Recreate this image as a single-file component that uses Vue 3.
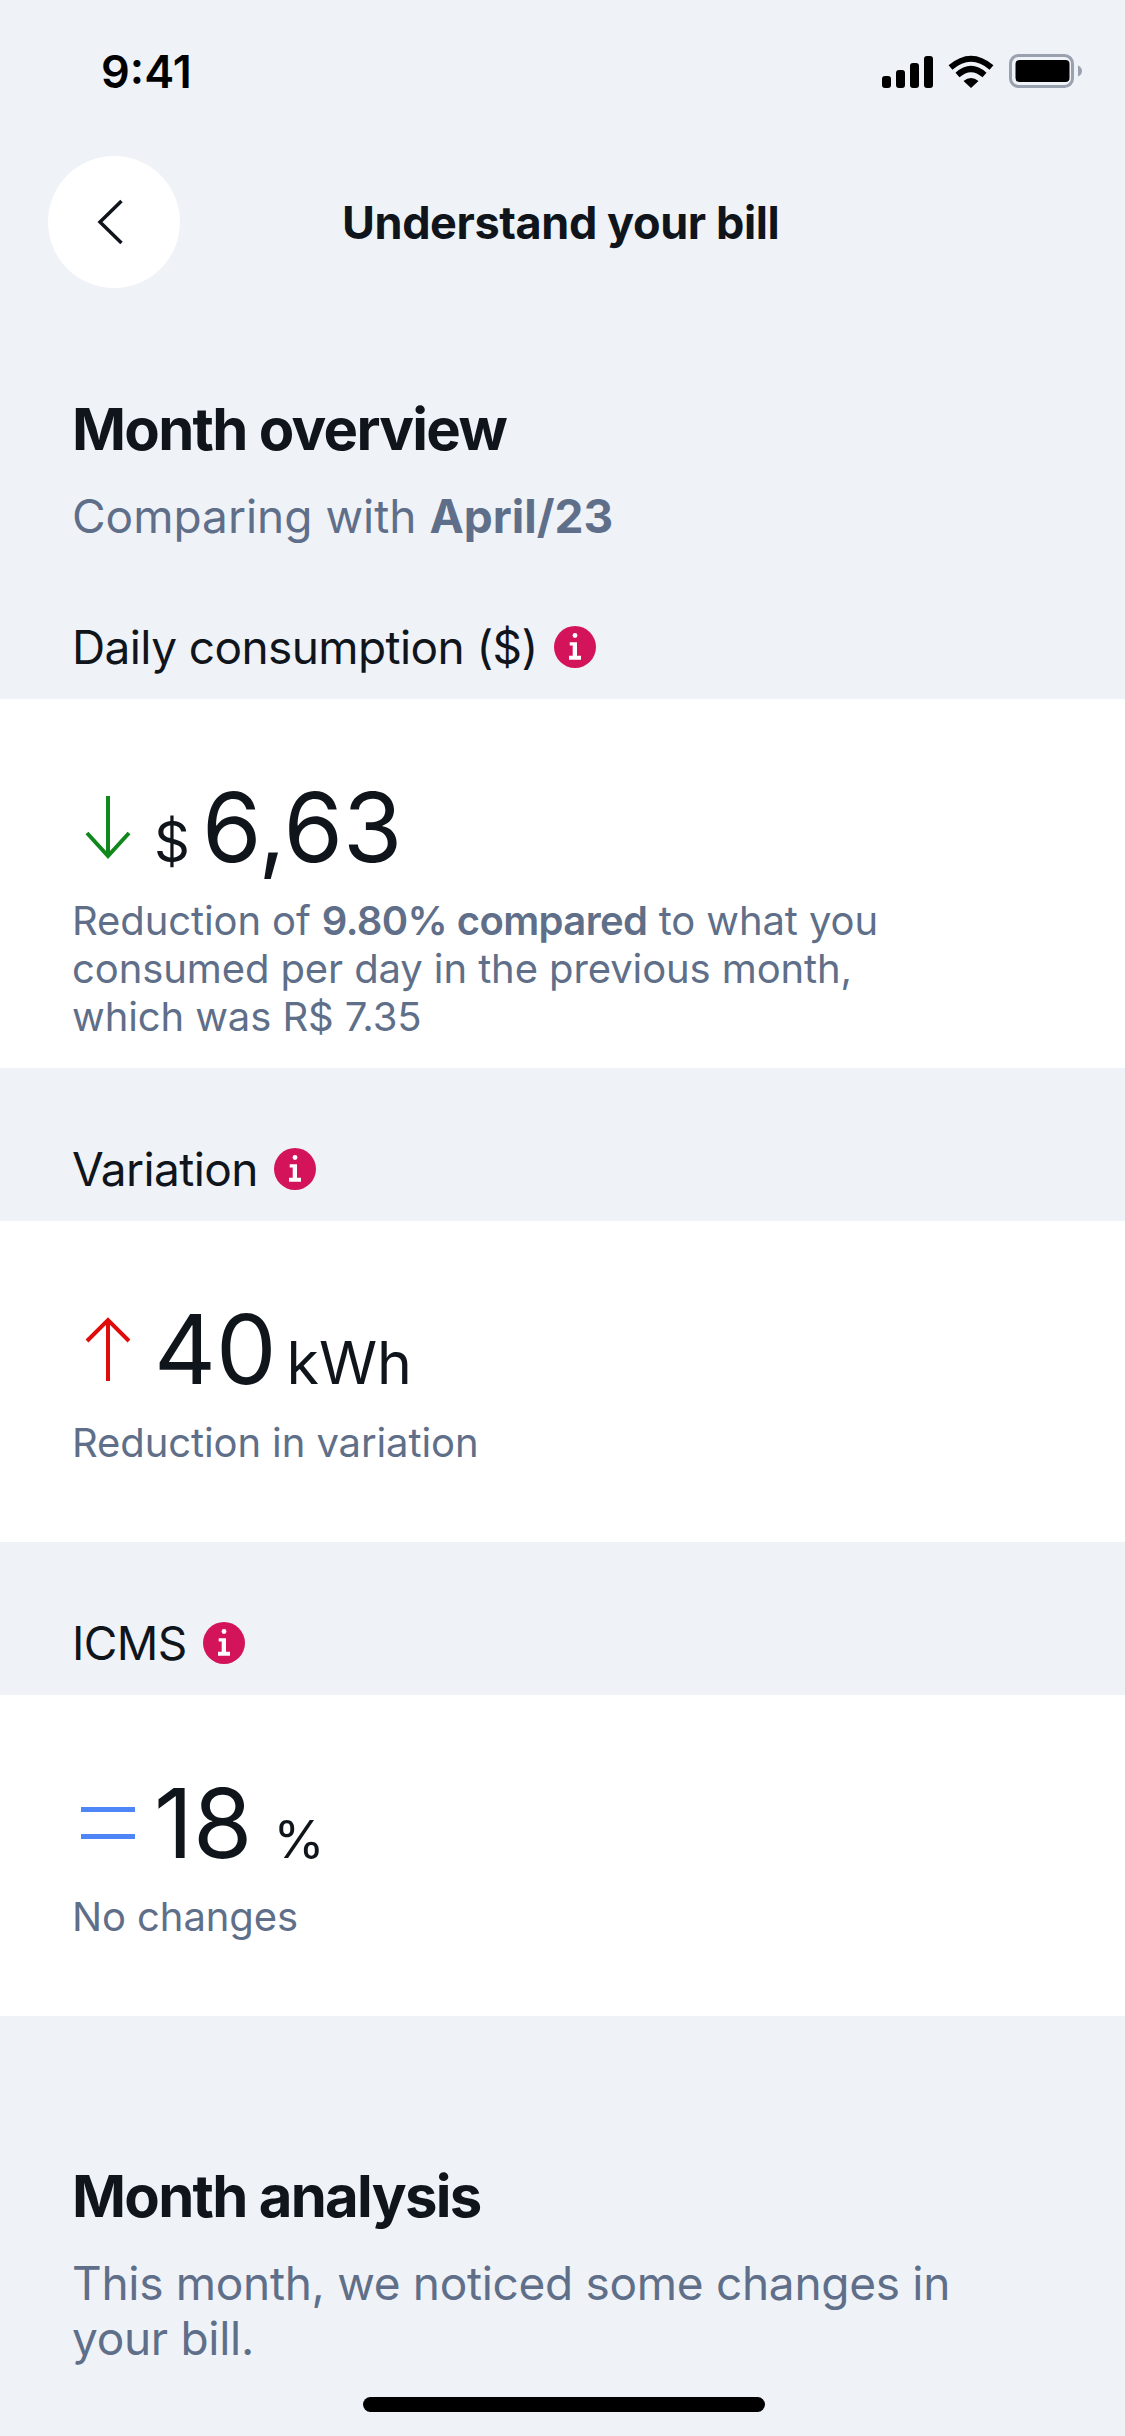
<script setup>
const rows = [
  {
    label: "Daily consumption ($)",
    icon: "down",
    prefix: "$",
    value: "6,63",
    suffix: "",
  },
  {
    label: "Variation",
    icon: "up",
    prefix: "",
    value: "40",
    suffix: "kWh",
    note: "Reduction in variation",
  },
  {
    label: "ICMS",
    icon: "equal",
    prefix: "",
    value: "18",
    suffix: "%",
    note: "No changes",
  },
];
</script>

<template>
  <div class="screen">
    <div class="status-bar">
      <span class="clock">9:41</span>
      <div class="status-icons">
        <svg width="51" height="33" viewBox="0 0 51 33">
          <rect x="0" y="21" width="9" height="12" rx="3" fill="#000" />
          <rect x="14" y="15" width="9" height="18" rx="3" fill="#000" />
          <rect x="28" y="8" width="9" height="25" rx="3" fill="#000" />
          <rect x="42" y="1" width="9" height="32" rx="3" fill="#000" />
        </svg>
        <svg width="46" height="33" viewBox="0 0 46 33">
          <path d="M23 33 L15.5 26 Q23 20 30.5 26 Z" fill="#000" />
          <path d="M9.5 20 Q23 8 36.5 20" fill="none" stroke="#000" stroke-width="6" />
          <path d="M2.5 12.5 Q23 -5 43.5 12.5" fill="none" stroke="#000" stroke-width="6" />
        </svg>
        <svg width="73" height="34" viewBox="0 0 73 34">
          <rect x="1.5" y="1.5" width="62" height="31" rx="8" fill="none" stroke="#9aa1ae" stroke-width="3" />
          <rect x="6.5" y="6" width="54" height="22" rx="4" fill="#000" />
          <path d="M69 11.5 Q73 13.5 73 17 Q73 20.5 69 22.5 Z" fill="#9aa1ae" />
        </svg>
      </div>
    </div>

    <header class="nav">
      <button class="back" aria-label="Back">
        <svg width="28" height="46" viewBox="0 0 28 46">
          <path d="M24.5 2 L3 23 L24.5 44" fill="none" stroke="#10151c" stroke-width="3.5" />
        </svg>
      </button>
      <h1 class="nav-title">Understand your bill</h1>
    </header>

    <section class="intro">
      <h2 class="heading">Month overview</h2>
      <p class="lead">Comparing with <b>April/23</b></p>
    </section>

    <section v-for="row in rows" :key="row.label" class="metric">
      <div class="metric-label">
        <span>{{ row.label }}</span>
        <svg class="info" width="42" height="42" viewBox="0 0 42 42">
          <circle cx="21" cy="21" r="21" fill="#d3145a" />
          <circle cx="21" cy="9.5" r="2.4" fill="#fff" />
          <path d="M15.7 16.3H23V29.7H27V33.7H15V29.7H18.7V19.5H15.7Z" fill="#fff" />
        </svg>
      </div>
      <div class="card" :class="{ tall: !row.note }">
        <div class="figure">
          <span class="trend">
            <svg v-if="row.icon === 'down'" width="46" height="64" viewBox="0 0 46 64">
              <path d="M23 1V61M2 38L23 61L44 38" fill="none" stroke="#11881c" stroke-width="4" />
            </svg>
            <svg v-else-if="row.icon === 'up'" width="46" height="64" viewBox="0 0 46 64">
              <path d="M23 64V3M2 24L23 3L44 24" fill="none" stroke="#e00b0b" stroke-width="4" />
            </svg>
            <svg v-else width="54" height="32" viewBox="0 0 54 32">
              <path d="M0 2.5H54M0 29.5H54" fill="none" stroke="#4f86f7" stroke-width="5" />
            </svg>
          </span>
          <span v-if="row.prefix" class="unit prefix">{{ row.prefix }}</span>
          <span class="value">{{ row.value }}</span>
          <span v-if="row.suffix" class="unit suffix" :class="{ percent: row.suffix === '%' }">{{ row.suffix }}</span>
        </div>
        <p v-if="row.note" class="note">{{ row.note }}</p>
        <p v-else class="note">
          Reduction of <b>9.80% compared</b> to what you<br />
          consumed per day in the previous month,<br />
          which was R$ 7.35
        </p>
      </div>
    </section>

    <section class="analysis">
      <h2 class="heading">Month analysis</h2>
      <p class="lead">This month, we noticed some changes in<br />your bill.</p>
    </section>

    <div class="home-bar"></div>
  </div>
</template>

<style scoped>
.screen {
  position: relative;
  width: 1125px;
  height: 2436px;
  overflow: hidden;
  background: #eff2f7;
  color: #10151c;
  font-family: Inter, "Noto Sans", sans-serif;
}

.status-bar {
  display: flex;
  justify-content: space-between;
  align-items: center;
  height: 70px;
  padding: 36px 43px 0 101px;
}

.clock {
  font-size: 45px;
  font-weight: 600;
  color: #000;
}

.status-icons {
  display: flex;
  align-items: center;
  gap: 15px;
}

.nav {
  display: flex;
  align-items: center;
  margin-top: 50px;
  padding-left: 48px;
  height: 132px;
}

.back {
  display: flex;
  align-items: center;
  justify-content: center;
  width: 132px;
  height: 132px;
  padding: 0 6px 0 0;
  border: 0;
  border-radius: 50%;
  background: #fff;
}

.nav-title {
  margin: 0 0 0 162px;
  font-size: 45px;
  font-weight: 700;
  letter-spacing: -0.4px;
}

.intro {
  padding: 0 72px 2.5px;
  margin-top: 106px;
}

.heading {
  margin: 0;
  font-size: 58px;
  line-height: 70px;
  font-weight: 700;
  letter-spacing: -1.7px;
}

.lead {
  margin: 25px 0 0;
  font-size: 46px;
  line-height: 55px;
  letter-spacing: -0.3px;
  color: #5f6f89;
}

.intro .lead {
  letter-spacing: 0;
}

.metric-label {
  display: flex;
  align-items: center;
  gap: 16px;
  padding: 79.5px 72px 31px;
  font-size: 46px;
  line-height: 42px;
  letter-spacing: -0.6px;
}

.card {
  height: 321.5px;
  padding: 78px 72px 0;
  box-sizing: border-box;
  background: #fff;
}

.card.tall {
  height: 369px;
}

.figure {
  display: flex;
  align-items: baseline;
  height: 100px;
}

.trend {
  display: flex;
  align-items: center;
  justify-content: center;
  width: 72px;
  margin-right: 10px;
  align-self: center;
}

.unit {
  font-size: 59px;
}

.prefix {
  font-size: 56px;
  margin-right: 12px;
}

.suffix {
  margin-left: 10px;
}

.suffix.percent {
  margin-left: 21px;
  font-size: 52px;
}

.value {
  font-size: 96px;
  line-height: 100px;
  font-weight: 400;
}

.note {
  margin: 20px 0 0;
  font-size: 40px;
  line-height: 48px;
  letter-spacing: -0.1px;
  color: #5f6f89;
}

.note b {
  font-weight: 600;
  letter-spacing: -0.6px;
}

.analysis {
  padding: 0 72px;
  margin-top: 145px;
}

.home-bar {
  position: absolute;
  left: 363px;
  bottom: 24px;
  width: 402px;
  height: 15px;
  border-radius: 8px;
  background: #000;
}

b {
  font-weight: 700;
}
</style>
